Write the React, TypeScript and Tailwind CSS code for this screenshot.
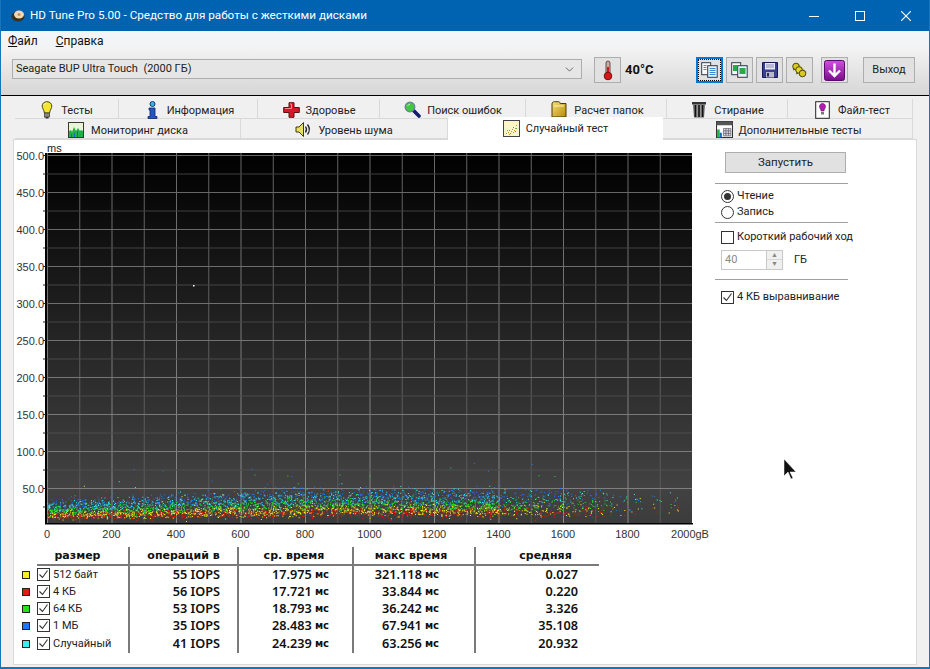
import React from 'react';
import { ChevronDown } from 'lucide-react';

// seeded random so the scatter stays the same on each run
function makeRandom(seed: number) {
  let a = seed;
  return () => {
    a = (a + 0x6d2b79f5) | 0;
    let t = Math.imul(a ^ (a >>> 15), 1 | a);
    t = (t + Math.imul(t ^ (t >>> 7), 61 | t)) ^ t;
    return ((t ^ (t >>> 14)) >>> 0) / 4294967296;
  };
}

const seriesDefs = [
  { color: '#1a78ff', base: 26, sd: 4.500, count: 1300 },
  { color: '#35f0f0', base: 24, sd: 4.500, count: 1100 },
  { color: '#22e022', base: 18.500, sd: 3.500, count: 1600 },
  { color: '#e01c10', base: 12, sd: 2.500, count: 1400 },
  { color: '#f6f020', base: 13.500, sd: 3, count: 1200 },
];

function buildPoints() {
  const rnd = makeRandom(4217);
  const gauss = () => (rnd() + rnd() + rnd() + rnd() - 2) * 1.7;
  return seriesDefs.map((s) => {
    let d = '';
    for (let i = 0; i < s.count; i++) {
      const gb = rnd() * 1960;
      const keep = gb < 1400 ? 1 : gb < 1600 ? 0.5 : gb < 1750 ? 0.3 : gb < 1840 ? 0.08 : gb < 1870 ? 0.01 : 0.04;
      if (rnd() > keep) continue;
      const rise = 1 + Math.min(gb, 800) / 1700;
      let ms = (s.base + gauss() * s.sd) * rise;
      if (rnd() < 0.006) ms += 15 + rnd() * 30;
      if (ms < 5) ms = 5 + rnd() * 4;
      const x = 47 + (gb / 2000) * 645;
      const y = 525 - ms * 0.74;
      d += `M${x.toFixed(1)} ${y.toFixed(1)}h1v1h-1z`;
    }
    return { color: s.color, d };
  });
}

const points = buildPoints();
const xLabels = [0, 200, 400, 600, 800, 1000, 1200, 1400, 1600, 1800];
const yLabels = ['500.0', '450.0', '400.0', '350.0', '300.0', '250.0', '200.0', '150.0', '100.0', '50.0'];

// horizontal lines get lighter towards the bottom of the plot
function hLineColor(i: number) {
  const level = i % 2 === 0 ? 100 + i * 1.5 : 62 + i * 1;
  const v = Math.round(level);
  return `rgb(${v},${v},${v})`;
}

function Chart() {
  return (
    <svg viewBox="14 140 700 405" className="block w-[700px] h-[405px]">
      <defs>
        <linearGradient id="plotBg" x1="0" y1="0" x2="0" y2="1">
          <stop offset="0" stopColor="#000000" />
          <stop offset="0.9" stopColor="#424242" />
          <stop offset="1" stopColor="#3c3c3c" />
        </linearGradient>
        <linearGradient id="gridMain" gradientUnits="userSpaceOnUse" x1="0" y1="153" x2="0" y2="523">
          <stop offset="0" stopColor="#666666" />
          <stop offset="1" stopColor="#8a8a8a" />
        </linearGradient>
        <linearGradient id="gridMinor" gradientUnits="userSpaceOnUse" x1="0" y1="153" x2="0" y2="523">
          <stop offset="0" stopColor="#626262" />
          <stop offset="1" stopColor="#585858" />
        </linearGradient>
      </defs>
      <rect x="47" y="153" width="645" height="371" fill="url(#plotBg)" />
      {Array.from({ length: 20 }).map((_, i) => (
        <line
          key={i}
          x1={47.5 + i * 32.25}
          x2={47.5 + i * 32.25}
          y1="153"
          y2="523"
          stroke={i % 2 === 0 ? 'url(#gridMain)' : 'url(#gridMinor)'}
          strokeWidth="1"
        />
      ))}
      {Array.from({ length: 19 }).map((_, i) => (
        <line key={i} x1="47" x2="692" y1={155.5 + i * 18.5} y2={155.5 + i * 18.5} stroke={hLineColor(i)} strokeWidth="1" />
      ))}
      {points.map((p) => (
        <path key={p.color} d={p.d} fill={p.color} />
      ))}
      <rect x="193" y="285" width="1.5" height="1.5" fill="#ffffff" />
      <rect x="45" y="153" width="2" height="371" fill="#000" />
      <rect x="45" y="523" width="648" height="1.5" fill="#000" />
      {Array.from({ length: 20 }).map((_, i) => (
        <line key={i} x1="43" x2="46" y1={155.5 + i * 18.5} y2={155.5 + i * 18.5} stroke="#222" />
      ))}
      <text x="47" y="152" fontSize="11" fill="#222" fontFamily="Liberation Sans">ms</text>
      {yLabels.map((t, i) => (
        <text key={t} x="44" y={159.5 + i * 37} textAnchor="end" fontSize="11" fill="#333" fontFamily="Liberation Sans">
          {t}
        </text>
      ))}
      {xLabels.map((t, i) => (
        <text key={t} x={47 + i * 64.5} y="538" textAnchor="middle" fontSize="11" fill="#333" fontFamily="Liberation Sans">
          {t}
        </text>
      ))}
      <text x="690" y="538" textAnchor="middle" fontSize="11" fill="#333" fontFamily="Liberation Sans">2000gB</text>
    </svg>
  );
}

/* ---- small program icons ---- */

const BulbIcon = () => (
  <svg width="12" height="18" viewBox="0 0 12 18">
    <path d="M6 .7C3 .7 1.2 2.6 1.2 5c0 2.4 1.8 3.6 2.2 7h5.2c.4-3.4 2.2-4.6 2.2-7C10.600 2.6 9 .7 6 .7z" fill="#f4e62a" stroke="#4a4a10" />
    <rect x="3.500" y="12" width="5" height="4" fill="#8a8a78" stroke="#333" strokeWidth=".7" />
    <rect x="4.500" y="16" width="3" height="1.500" fill="#333" />
    <path d="M3.500 3.500c.6-1 1.300-1.300 2-1.300" stroke="#fff" fill="none" />
  </svg>
);
const InfoIcon = () => (
  <svg width="11" height="18" viewBox="0 0 11 18">
    <circle cx="5.500" cy="3" r="2.500" fill="#39b4e8" stroke="#123a7a" />
    <path d="M2 7h6v8.500h2V17.500H1v-2h2V9H2z" fill="#2454c8" stroke="#0d2468" strokeWidth=".8" />
  </svg>
);
const CrossIcon = () => (
  <svg width="17" height="16" viewBox="0 0 17 16">
    <path d="M6 .7h5v4.800h5.300v5H11v4.800H6v-4.800H.7v-5H6z" fill="#d8182a" stroke="#5a1010" />
    <path d="M7 2h1.500v4.500H2" stroke="#f58a90" fill="none" />
  </svg>
);
const LensIcon = () => (
  <svg width="17" height="17" viewBox="0 0 17 17">
    <path d="M9.500 9.500l5.500 5.500" stroke="#12206a" strokeWidth="3.600" strokeLinecap="round" />
    <circle cx="6" cy="6" r="4.800" fill="#3fc844" stroke="#6f7f8f" strokeWidth="1.300" />
    <path d="M3.500 5c.5-1 1.200-1.600 2.400-1.800" stroke="#c8f5c8" fill="none" />
  </svg>
);
const FolderIcon = () => (
  <svg width="16" height="17" viewBox="0 0 16 17">
    <defs>
      <linearGradient id="fld" x1="0" y1="0" x2="1" y2="1">
        <stop offset="0" stopColor="#f6e27a" />
        <stop offset="1" stopColor="#b88a00" />
      </linearGradient>
    </defs>
    <path d="M1 16V3c0-1.500 1-2.300 2.500-2.300h4c1 0 1.500.8 1.800 1.800H15V16z" fill="url(#fld)" stroke="#4a3a10" />
    <path d="M3 5h10" stroke="#fff2b0" />
  </svg>
);
const TrashIcon = () => (
  <svg width="16" height="17" viewBox="0 0 16 17">
    <rect x="1" y="1" width="14" height="2.500" fill="#333" />
    <path d="M2 3.500h12L13 16.500H3z" fill="#666" />
    <path d="M4.500 4v12M8 4v12M11.500 4v12" stroke="#111" strokeWidth="1.400" />
    <path d="M6.200 4v12M9.800 4v12" stroke="#bbb" strokeWidth=".8" />
  </svg>
);
const FileIcon = () => (
  <svg width="15" height="18" viewBox="0 0 15 18">
    <rect x=".7" y=".7" width="13.600" height="16.600" fill="#fff" stroke="#222" />
    <path d="M7.500 2.500c-2 0-3 1.400-3 2.900 0 1.700 1.300 2.500 1.600 4.600h2.800c.3-2.100 1.600-2.900 1.600-4.600 0-1.500-1-2.900-3-2.900z" fill="#b01cb0" stroke="#601060" strokeWidth=".6" />
    <rect x="6" y="11" width="3" height="2.500" fill="#777" />
  </svg>
);
const MonitorIcon = () => (
  <svg width="16" height="16" viewBox="0 0 16 16">
    <rect x=".5" y=".5" width="15" height="15" fill="#e8f5d8" stroke="#3a3a2a" />
    <path d="M1 15V9l2-1 1 2 2-5 2 4 2-3 2 3 1-1 2 1v6z" fill="#22b04a" />
    <path d="M6 15v-4h1v4zM9 15V9h1v6zM3 15v-3h1v3z" fill="#1a66c8" />
  </svg>
);
const SpeakerIcon = () => (
  <svg width="17" height="17" viewBox="0 0 17 17">
    <path d="M1 6h3l4.500-4.500v14L4 11H1z" fill="#eadf60" stroke="#3a3a10" />
    <path d="M10.500 5.500c1.200 1.800 1.200 4.200 0 6M12.500 3.500c2.200 3 2.200 7 0 10" fill="none" stroke="#222" strokeWidth="1.300" />
  </svg>
);
const RandomIcon = () => (
  <svg width="17" height="17" viewBox="0 0 17 17">
    <rect x=".5" y=".5" width="16" height="16" fill="#fdf6c8" stroke="#444" />
    <path d="M3 13h1v1H3zM5 12h1v1H5zM6 14h1v1H6zM8 11h1v1H8zM10 12h1v1h-1zM9 9h1v1H9zM12 8h1v1h-1zM13 5h1v1h-1zM11 10h1v1h-1zM4 10h1v1H4z" fill="#c98a20" />
    <path d="M7 13h1v1H7zM10 7h1v1h-1zM12 11h1v1h-1zM6 10h1v1H6zM13 8h1v1h-1z" fill="#50a050" />
  </svg>
);
const ExtraIcon = () => (
  <svg width="17" height="17" viewBox="0 0 16 16">
    <rect x=".5" y=".5" width="15" height="15" fill="#fff" stroke="#333" />
    <rect x=".5" y=".5" width="15" height="3.500" fill="#555" />
    <rect x="1" y="8" width="2.500" height="7.500" fill="#22b04a" />
    <rect x="3.500" y="11" width="2" height="4.500" fill="#1a66c8" />
    <path d="M7 7h7v7H7z" fill="#d8d0e8" stroke="#555" strokeWidth=".6" />
    <path d="M9.300 7v7M11.700 7v7M7 9.300h7M7 11.700h7" stroke="#555" strokeWidth=".6" />
  </svg>
);
const ThermoIcon = () => (
  <svg width="12" height="21" viewBox="0 0 12 21">
    <rect x="4" y="1" width="4" height="13" rx="2" fill="#c9a8a0" stroke="#6a4a4a" />
    <rect x="5" y="7" width="2" height="8" fill="#d01818" />
    <circle cx="6" cy="16" r="3.800" fill="#d81818" stroke="#701010" />
  </svg>
);
const CopyIcon = ({ tint }: { tint: 'blue' | 'green' }) => {
  const c = tint === 'blue' ? '#3a8ad8' : '#2aa84a';
  return (
    <svg width="17" height="16" viewBox="0 0 17 16">
      <rect x=".7" y=".7" width="9" height="12" fill="#fff" stroke="#2a3a4a" />
      <rect x="6.700" y="3.700" width="9.500" height="11.600" fill="#eaf3fb" stroke="#2a3a4a" />
      {tint === 'blue' ? (
        <path d="M8.500 6.500h6M8.500 8.500h6M8.500 10.500h6M8.500 12.500h6M2.500 3.500h3M2.500 5.500h3M2.500 7.500h3" stroke={c} />
      ) : (
        <>
          <rect x="2" y="3" width="4" height="6" fill={c} />
          <rect x="8.500" y="6" width="6" height="6" fill={c} />
        </>
      )}
    </svg>
  );
};
const FloppyIcon = () => (
  <svg width="16" height="16" viewBox="0 0 16 16">
    <path d="M.5.500h15v15H.5z" fill="#3a3f90" stroke="#1a1a50" />
    <rect x="3" y="1" width="10" height="6.500" fill="#e8e8f4" />
    <path d="M4 3h8M4 5h8" stroke="#8a8ab0" />
    <rect x="4" y="10" width="8" height="5.500" fill="#b8b8c8" />
    <rect x="5" y="11" width="2" height="3.500" fill="#2a2a60" />
  </svg>
);
const CoinsIcon = () => (
  <svg width="17" height="17" viewBox="0 0 17 17">
    <path d="M3 3l4-2 9 9-3 4z" fill="#a89a20" opacity=".4" />
    <circle cx="5" cy="4.500" r="3.300" fill="#d8c820" stroke="#4a4a10" />
    <circle cx="8" cy="8" r="3.300" fill="#e6d628" stroke="#4a4a10" />
    <circle cx="11.500" cy="11.500" r="3.300" fill="#d8c820" stroke="#4a4a10" />
    <path d="M2 8l2-1M5 12l2-1" stroke="#4a4a10" />
  </svg>
);
const DownIcon = () => (
  <svg width="21" height="21" viewBox="0 0 21 21">
    <defs>
      <linearGradient id="pur" x1="0" y1="0" x2="0" y2="1">
        <stop offset="0" stopColor="#d050e0" />
        <stop offset="1" stopColor="#7a0c8c" />
      </linearGradient>
    </defs>
    <rect x=".5" y=".5" width="20" height="20" rx="2" fill="url(#pur)" stroke="#5a0a6a" />
    <path d="M10.500 3.500v12M5 10.500l5.500 5.500 5.500-5.500" fill="none" stroke="#fff" strokeWidth="2.400" />
  </svg>
);
const AppIcon = () => (
  <svg width="16" height="16" viewBox="0 0 16 16">
    <ellipse cx="8" cy="8.500" rx="6.500" ry="5" fill="#3a3020" />
    <ellipse cx="9" cy="6.500" rx="5" ry="4" fill="#f0d8b0" />
    <circle cx="9" cy="6.500" r="1.500" fill="#c89060" />
  </svg>
);

function CheckBox({ checked }: { checked?: boolean }) {
  return (
    <span className="flex items-center justify-center w-[13px] h-[13px] shrink-0 bg-white border border-[#333]">
      {checked && (
        <svg width="11" height="11" viewBox="0 0 11 11">
          <path d="M1.500 5.500l3 3 5-7" fill="none" stroke="#333" strokeWidth="1.100" />
        </svg>
      )}
    </span>
  );
}

function Radio({ checked }: { checked?: boolean }) {
  return (
    <span className="flex items-center justify-center w-[13px] h-[13px] shrink-0 rounded-full bg-white border border-[#333]">
      {checked && <span className="block w-[7px] h-[7px] rounded-full bg-[#333]" />}
    </span>
  );
}

function TabItem({ icon, label, width, gap }: { icon: React.ReactNode; label: string; width: string; gap: string }) {
  return (
    <div className={`${width} ${gap} h-[20px] pt-[2px] flex items-center justify-center bg-[#f0f0f0] border-r border-b border-[#d9d9d9] text-[#222]`}>
      {icon}
      <span className="pt-[4px]">{label}</span>
    </div>
  );
}

function ToolButton({ children, active }: { children: React.ReactNode; active?: boolean }) {
  return (
    <button
      className={
        active
          ? 'w-[27px] h-[26px] flex items-center justify-center bg-[#e1e1e1] border-2 border-[#0078d7] outline-1 outline-dotted outline-offset-[-3px] outline-black'
          : 'w-[27px] h-[26px] flex items-center justify-center bg-[#e1e1e1] border border-[#adadad]'
      }
    >
      {children}
    </button>
  );
}

const rows = [
  { color: '#f6f020', label: '512 байт', iops: '55 IOPS', avg: '17.975', max: '321.118', mean: '0.027', h: 'h-[17px]' },
  { color: '#e01c10', label: '4 КБ', iops: '56 IOPS', avg: '17.721', max: '33.844', mean: '0.220', h: 'h-[17px]' },
  { color: '#22e022', label: '64 КБ', iops: '53 IOPS', avg: '18.793', max: '36.242', mean: '3.326', h: 'h-[17px]' },
  { color: '#1a78ff', label: '1 МБ', iops: '35 IOPS', avg: '28.483', max: '67.941', mean: '35.108', h: 'h-[17px]' },
  { color: '#35f0f0', label: 'Случайный', iops: '41 IOPS', avg: '24.239', max: '63.256', mean: '20.932', h: 'h-[19px]' },
];

const headCell = "h-[19px] pt-[1px] flex items-center justify-center border-b-[2px] border-[#7a7a7a] font-bold text-[11px] text-[#111] font-['DejaVu_Sans',sans-serif]";
const sepCell = 'border-l-[2px] border-[#7a7a7a]';
const numCell = "flex items-center justify-end text-[12.700px] font-semibold text-[#111] font-['Noto_Sans',sans-serif]";
const unit = "ml-[3px] font-bold text-[10px] font-['DejaVu_Sans',sans-serif]";

function ResultsTable() {
  return (
    <div className="mt-[2px] ml-[1px] w-[584px] grid grid-cols-[113px_109px_115px_122px_125px]">
      <div className={`${headCell} ml-[22px] pr-[10px]`}>размер</div>
      <div className={`${headCell} ${sepCell}`}>операций в</div>
      <div className={`${headCell} ${sepCell} pr-[3px]`}>ср. время</div>
      <div className={`${headCell} ${sepCell} pr-[6px]`}>макс время</div>
      <div className={`${headCell} ${sepCell} pl-[16px]`}>средняя</div>
      {rows.map((r) => (
        <React.Fragment key={r.label}>
          <div className={`${r.h} flex items-center pl-[7px] text-[#222]`}>
            <span className="w-[8px] h-[8px] border border-[#222]" style={{ backgroundColor: r.color }} />
            <span className="ml-[7px]"><CheckBox checked /></span>
            <span className="ml-[3px] pt-[2px]">{r.label}</span>
          </div>
          <div className={`${r.h} ${sepCell} ${numCell} pr-[17px]`}>{r.iops}</div>
          <div className={`${r.h} ${sepCell} ${numCell} pr-[23px]`}>
            {r.avg}
            <span className={unit}>мс</span>
          </div>
          <div className={`${r.h} ${sepCell} ${numCell} pr-[35px]`}>
            {r.max}
            <span className={unit}>мс</span>
          </div>
          <div className={`${r.h} ${sepCell} ${numCell} pr-[21px]`}>{r.mean}</div>
        </React.Fragment>
      ))}
    </div>
  );
}

function SidePanel() {
  return (
    <div className="ml-[1px] w-[133px] pt-[12px] text-[#222]">
      <button className="ml-[10px] w-[121px] h-[21px] flex items-center justify-center bg-[#e1e1e1] border border-[#adadad] text-[11.500px]">Запустить</button>
      <div className="mt-[10px] h-px bg-[#a0a0a0]" />
      <label className="mt-[4px] ml-[6px] h-[16px] flex items-center gap-[3px]"><Radio checked />Чтение</label>
      <label className="ml-[6px] h-[16px] flex items-center gap-[3px]"><Radio />Запись</label>
      <div className="mt-[2px] h-px bg-[#a0a0a0]" />
      <label className="mt-[6px] ml-[6px] h-[16px] flex items-center gap-[3px] whitespace-nowrap"><CheckBox />Короткий рабочий ход</label>
      <div className="mt-[5px] ml-[6px] flex items-center">
        <div className="w-[62px] h-[20px] flex items-center justify-between bg-white border border-[#c8c8c8] pl-[3px] text-[#8a8a8a]">
          40
          <div className="w-[16px] h-full flex flex-col border-l border-[#c8c8c8] bg-[#f0f0f0] text-[#888]">
            <span className="h-1/2 flex items-center justify-center text-[7px] leading-none border-b border-[#d8d8d8]">▲</span>
            <span className="h-1/2 flex items-center justify-center text-[7px] leading-none">▼</span>
          </div>
        </div>
        <span className="ml-[11px]">ГБ</span>
      </div>
      <div className="mt-[9px] h-px bg-[#a0a0a0]" />
      <label className="mt-[9px] ml-[6px] h-[16px] flex items-center gap-[3px] whitespace-nowrap"><CheckBox checked />4 КБ выравнивание</label>
    </div>
  );
}

export default function App() {
  return (
    <div className="relative w-[930px] h-[669px] flex flex-col overflow-hidden bg-[#f0f0f0] border-x border-b-2 border-[#1874bb] text-[11px] font-['Roboto',sans-serif]">
      {/* title bar */}
      <div className="h-[31px] shrink-0 flex items-center bg-[#0063b1] text-white">
        <span className="ml-[9px] w-[20px] flex"><AppIcon /></span>
        <span className="text-[11.700px]">HD Tune Pro 5.00 - Средство для работы с жесткими дисками</span>
        <div className="ml-auto flex items-center text-white">
          <div className="w-[46px] h-[31px] flex items-center justify-center">
            <svg width="10" height="10" viewBox="0 0 10 10"><path d="M0 5.500h10" stroke="#fff" /></svg>
          </div>
          <div className="w-[46px] h-[31px] flex items-center justify-center">
            <svg width="10" height="10" viewBox="0 0 10 10"><rect x=".5" y=".5" width="9" height="9" fill="none" stroke="#fff" /></svg>
          </div>
          <div className="w-[46px] h-[31px] flex items-center justify-center">
            <svg width="10" height="10" viewBox="0 0 10 10"><path d="M0 0l10 10M10 0L0 10" stroke="#fff" strokeWidth="1.100" /></svg>
          </div>
        </div>
      </div>

      {/* menu */}
      <div className="h-[19px] shrink-0 flex items-center gap-[18px] pl-[7px] bg-gradient-to-b from-[#f2f7fb] to-[#f2f2f2] text-[#111] text-[12px]">
        <span><u>Ф</u>айл</span>
        <span><u>С</u>правка</span>
      </div>

      {/* toolbar */}
      <div className="h-[46px] shrink-0 flex items-center pl-[11px] pb-[5px] bg-gradient-to-b from-[#f2f2f2] to-[#d6d6d6] border-b border-black">
        <div className="w-[570px] h-[20px] mb-[2px] flex items-center justify-between pl-[3px] pr-[5px] border border-[#adadad] bg-[#e6e6e6] text-[#222]">
          <span className="pt-[1px]">Seagate BUP Ultra Touch&nbsp; (2000 ГБ)</span>
          <ChevronDown size={13} strokeWidth={1.400} className="text-[#444]" />
        </div>
        <div className="ml-[12px]"><ToolButton><ThermoIcon /></ToolButton></div>
        <span className="ml-[4px] w-[71px] font-bold text-[13px] text-[#111]">40°C</span>
        <div className="flex gap-[3px]">
          <ToolButton active><CopyIcon tint="blue" /></ToolButton>
          <ToolButton><CopyIcon tint="green" /></ToolButton>
          <ToolButton><FloppyIcon /></ToolButton>
          <ToolButton><CoinsIcon /></ToolButton>
        </div>
        <div className="ml-[8px]"><ToolButton><DownIcon /></ToolButton></div>
        <button className="ml-[15px] w-[52px] h-[26px] flex items-center justify-center bg-[#e1e1e1] border border-[#adadad] text-[#222]">Выход</button>
      </div>

      {/* tabs */}
      <div className="ml-[14px] mt-[3px] w-[898px] shrink-0">
        <div className="flex">
          <TabItem width="w-[104px]" gap="gap-[8px] pl-[1px]" icon={<BulbIcon />} label="Тесты" />
          <TabItem width="w-[139px]" gap="gap-[9px] pl-[5px]" icon={<InfoIcon />} label="Информация" />
          <TabItem width="w-[122px]" gap="gap-[6px] pl-[1px]" icon={<CrossIcon />} label="Здоровье" />
          <TabItem width="w-[146px]" gap="gap-[6px] pl-[1px]" icon={<LensIcon />} label="Поиск ошибок" />
          <TabItem width="w-[141px]" gap="gap-[7px] pl-[3px]" icon={<FolderIcon />} label="Расчет папок" />
          <TabItem width="w-[121px]" gap="gap-[7px] pl-[1px]" icon={<TrashIcon />} label="Стирание" />
          <TabItem width="w-[125px]" gap="gap-[8px] pl-[5px]" icon={<FileIcon />} label="Файл-тест" />
        </div>
        <div className="flex h-[20px]">
          <TabItem width="w-[226px]" gap="gap-[7px] pl-[1px]" icon={<MonitorIcon />} label="Мониторинг диска" />
          <TabItem width="w-[207px]" gap="gap-[6px]" icon={<SpeakerIcon />} label="Уровень шума" />
          <div className="relative z-10 -mt-[2px] w-[215px] h-[23px] flex items-center justify-center gap-[6px] bg-white text-[#222]">
            <RandomIcon />
            <span className="pt-[1px]">Случайный тест</span>
          </div>
          <TabItem width="w-[250px]" gap="gap-[6px] pl-[2px]" icon={<ExtraIcon />} label="Дополнительные тесты" />
        </div>
      </div>

      {/* panel */}
      <div className="ml-[12px] w-[904px] h-[526px] flex bg-white border border-[#d9d9d9]">
        <div className="w-[700px] shrink-0 flex flex-col">
          <Chart />
          <ResultsTable />
        </div>
        <SidePanel />
      </div>

      {/* mouse pointer */}
      <svg className="absolute left-[782px] top-[459px]" width="14" height="22" viewBox="0 0 14 22">
        <path d="M1 0v17l4-4 3 7 2-1-3-6h6z" fill="#111" stroke="#fff" strokeWidth=".5" />
      </svg>
    </div>
  );
}
